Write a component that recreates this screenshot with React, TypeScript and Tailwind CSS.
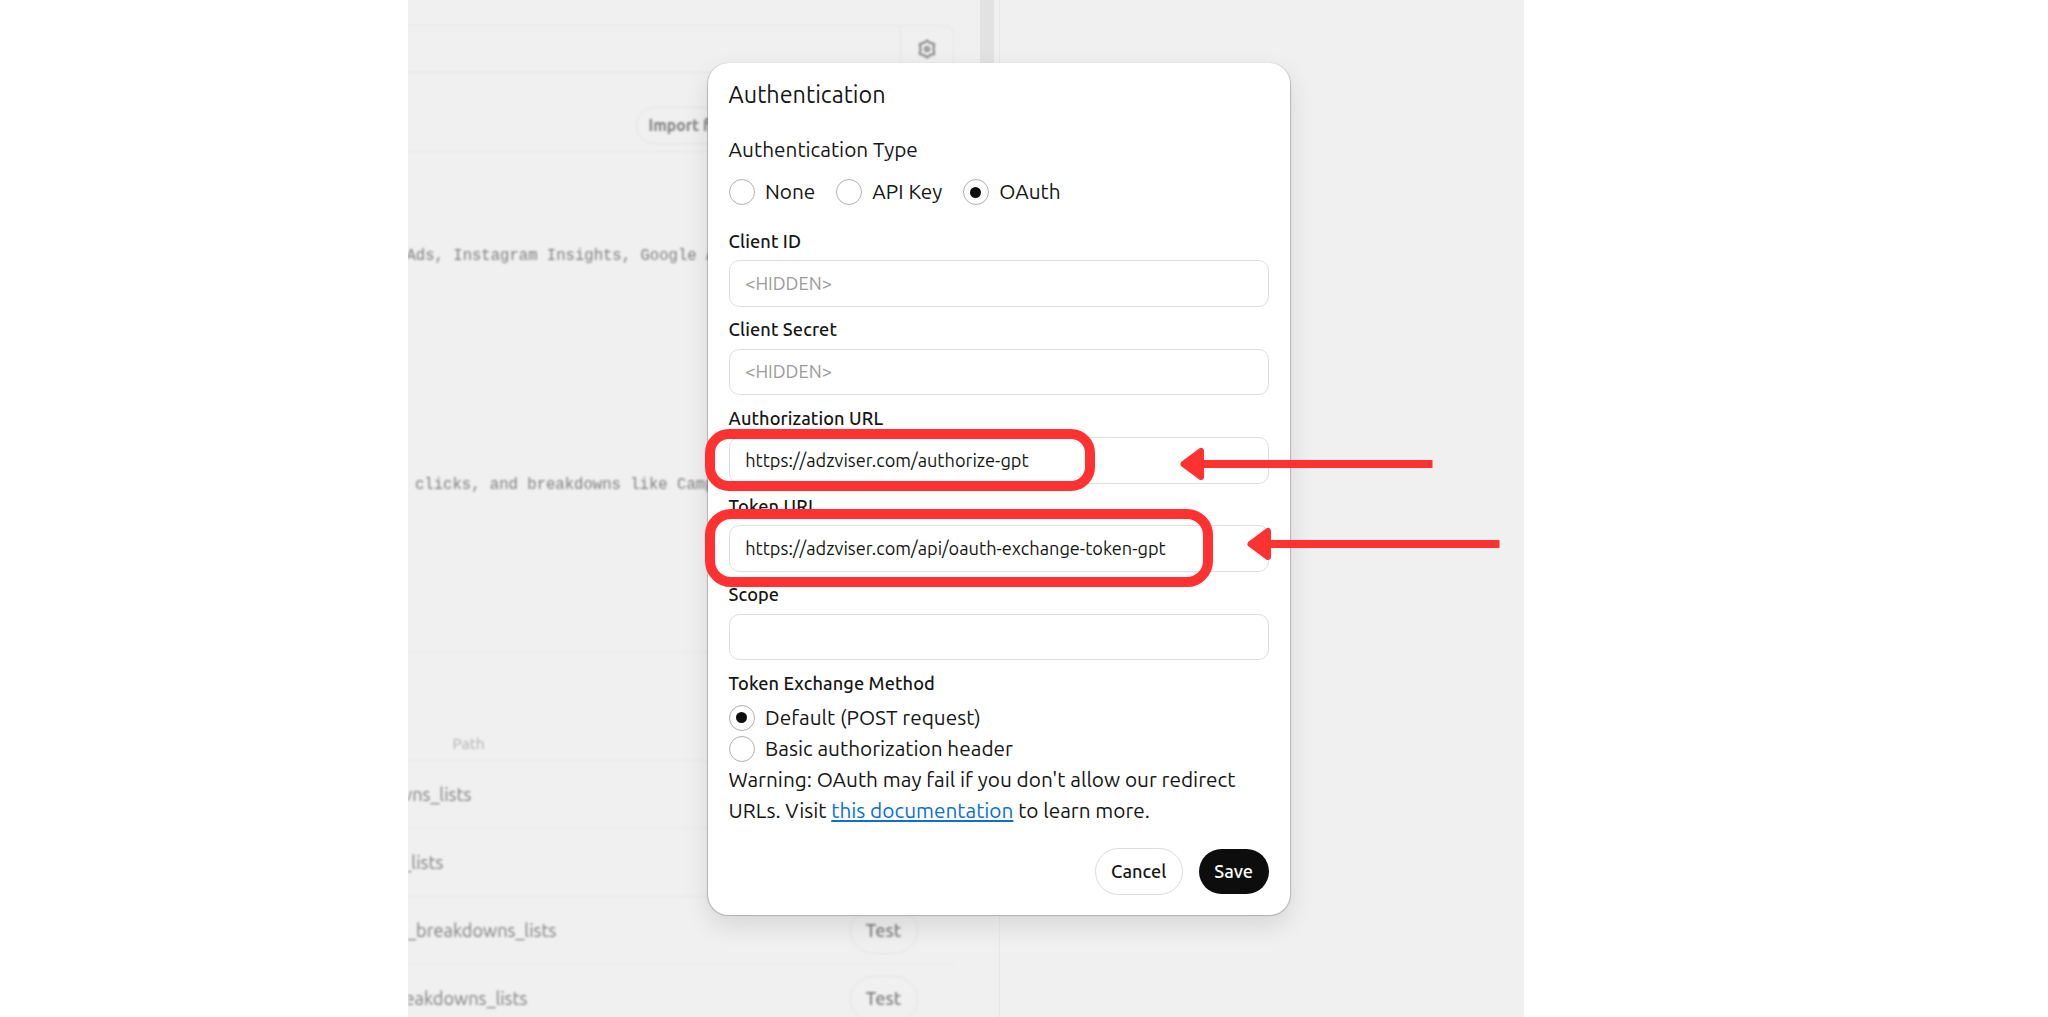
import { useState } from 'react';
import clsx from 'clsx';

interface RadioProps {
  label: string;
  checked: boolean;
  onSelect: () => void;
}

const Radio = ({ label, checked, onSelect }: RadioProps) => (
  <button type="button" role="radio" aria-checked={checked} onClick={onSelect} className="flex h-[31.2px] items-center gap-[10.4px]">
    <span className="mt-[1.5px] flex size-[26px] shrink-0 items-center justify-center rounded-full border border-[#b0b0b0] bg-white">
      {checked && <span className="size-[11px] rounded-full bg-[#0d0d0d]" />}
    </span>
    <span className="whitespace-nowrap">{label}</span>
  </button>
);

interface FieldProps {
  label: string;
  value?: string;
  placeholder?: string;
}

const Field = ({ label, value, placeholder }: FieldProps) => (
  <div className="pt-[9.4px]">
    <div className="mb-[6.2px] text-[18.2px] leading-[26px] font-medium tracking-[0.1px]">{label}</div>
    <div className="flex h-[46.8px] items-center rounded-[10.4px] border border-[#dedede] pl-[15.6px] text-[18.2px]">
      {value ? <span>{value}</span> : <span className="text-[#9b9b9b]">{placeholder}</span>}
    </div>
  </div>
);

interface ActionRow {
  path: string;
  width: string;
  test?: boolean;
}

const rows: ActionRow[] = [
  { path: 'wns_lists', width: 'w-[64px]' },
  { path: '_lists', width: 'w-[36px]' },
  { path: '_breakdowns_lists', width: 'w-[149px]', test: true },
  { path: 'eakdowns_lists', width: 'w-[120px]', test: true },
];

const GearIcon = () => (
  <svg width="20" height="22" viewBox="0 0 20 22" fill="none" stroke="#8a8a8a" strokeWidth="2.2" strokeLinejoin="round">
    <path d="M10 2.500 L12.600 4.600 L17.200 6 L16.600 9.500 V12.500 L17.200 16 L12.600 17.400 L10 19.500 L7.400 17.400 L2.800 16 L3.400 12.500 V9.500 L2.800 6 L7.400 4.600 Z" />
    <circle cx="10" cy="11" r="2" />
  </svg>
);

// Blurred editor page behind the dialog
const Backdrop = () => (
  <div className="flex h-full text-[18.2px] text-[#7e7e7e]">
    <div className="flex w-[546px] shrink-0 flex-col blur-[1px]">
      <div className="mt-[25px] flex h-[48px] shrink-0 rounded-r-[10px] border border-l-0 border-[#e5e5e5]">
        <div className="flex-1" />
        <div className="flex w-[53px] items-center justify-center border-l border-[#e5e5e5]">
          <GearIcon />
        </div>
      </div>
      <div className="flex h-[79px] shrink-0 items-end border-b border-[#e7e7e7] pb-[7px] pl-[228px]">
        <div className="flex h-[37px] w-[200px] items-center rounded-full border border-[#e2e2e2] pl-[12px] text-[15.8px] font-semibold">
          Import f
        </div>
      </div>
      <div className="flex h-[501px] shrink-0 flex-col overflow-hidden border-b border-[#e7e7e7] font-['Liberation_Mono',monospace] text-[15.6px] leading-[26px] whitespace-pre">
        <div className="mt-[91px] -ml-px">Ads, Instagram Insights, Google A</div>
        <div className="mt-[203px] ml-[7.5px]">clicks, and breakdowns like Camp</div>
      </div>
      <div className="flex h-[107.5px] shrink-0 items-end border-b border-[#e7e7e7] pb-[4px] pl-[45px] text-[15.6px] text-[#b0b0b0]">
        Path
      </div>
      {rows.map(r => (
        <div key={r.path} className="flex h-[68.3px] shrink-0 items-center justify-between border-b border-[#e7e7e7] pr-[36px]">
          <div className={clsx('flex justify-end overflow-hidden', r.width)}>
            <span>{r.path}</span>
          </div>
          {r.test && (
            <div className="flex h-[47px] w-[68px] items-center justify-center rounded-full border border-[#e2e2e2] font-medium">
              Test
            </div>
          )}
        </div>
      ))}
    </div>
    <div className="ml-[26.5px] h-[300px] w-[14px] shrink-0 bg-[#e2e2e2] blur-[0.5px]" />
    <div className="ml-[5px] flex-1 border-l border-[#e7e7e7]" />
  </div>
);

const Arrow = () => (
  <svg width="253" height="34" viewBox="0 0 253 34" fill="#ff3131">
    <path d="M22 13H252.500V21H22Z" />
    <path d="M3.500 17 L21 4 V30 Z" stroke="#ff3131" strokeWidth="6" strokeLinejoin="round" />
  </svg>
);

export default function App() {
  const [authType, setAuthType] = useState('OAuth');
  const [method, setMethod] = useState('Default (POST request)');

  return (
    <div className="h-[1017px] w-full overflow-hidden bg-white font-['Ubuntu','Noto_Sans',sans-serif]">
      <div className="relative ml-[407.5px] h-full w-[1116px] overflow-hidden bg-[#f0f0f0]">
        <Backdrop />

        <div className="absolute top-[62.8px] left-[300.3px] flex w-[582.4px] flex-col rounded-[20.8px] bg-white px-[20.8px] pt-[16.2px] pb-[20.3px] text-[20.8px] leading-[31.2px] text-[#161616] shadow-[0_0.5px_1px_0.5px_rgba(0,0,0,0.2),0_10px_26px_rgba(0,0,0,0.11)]">
          <h2 className="mb-[24.2px] text-[23.4px]">Authentication</h2>
          <div className="mb-[10.4px]">Authentication Type</div>
          <div className="mb-[11.4px] flex gap-[20.6px]" role="radiogroup">
            {['None', 'API Key', 'OAuth'].map(t => (
              <Radio key={t} label={t} checked={authType === t} onSelect={() => setAuthType(t)} />
            ))}
          </div>

          <Field label="Client ID" placeholder="<HIDDEN>" />
          <Field label="Client Secret" placeholder="<HIDDEN>" />
          <Field label="Authorization URL" value="https://adzviser.com/authorize-gpt" />
          <Field label="Token URL" value="https://adzviser.com/api/oauth-exchange-token-gpt" />
          <Field label="Scope" />

          <div className="mt-[10px] mb-[5.2px] text-[18.2px] leading-[26px] font-medium tracking-[0.1px]">Token Exchange Method</div>
          <div role="radiogroup">
            {['Default (POST request)', 'Basic authorization header'].map(m => (
              <Radio key={m} label={m} checked={method === m} onSelect={() => setMethod(m)} />
            ))}
          </div>
          <p>
            Warning: OAuth may fail if you don't allow our redirect URLs. Visit{' '}
            <a href="#" className="text-[#0a6fd6] underline">this documentation</a> to learn more.
          </p>

          <div className="mt-[21.6px] mr-[0.8px] flex items-center justify-end gap-[15.6px] text-[18.2px] font-medium">
            <button type="button" className="h-[46.8px] w-[88.5px] rounded-full border border-[#dcdcdc]">Cancel</button>
            <button type="button" className="h-[45.5px] w-[70px] rounded-full bg-[#0d0d0d] text-white">Save</button>
          </div>
        </div>

        {/* Highlights drawn over the dialog */}
        <div className="absolute top-[429px] left-[297.5px] h-[61.5px] w-[389.5px] rounded-[24px] border-[10.7px] border-[#ff3131]" />
        <div className="absolute top-[509px] left-[297.5px] h-[78px] w-[507.5px] rounded-[26px] border-[10.7px] border-[#ff3131]" />
        <div className="absolute top-[447px] left-[772px]"><Arrow /></div>
        <div className="absolute top-[527px] left-[839px]"><Arrow /></div>
      </div>
    </div>
  );
}
